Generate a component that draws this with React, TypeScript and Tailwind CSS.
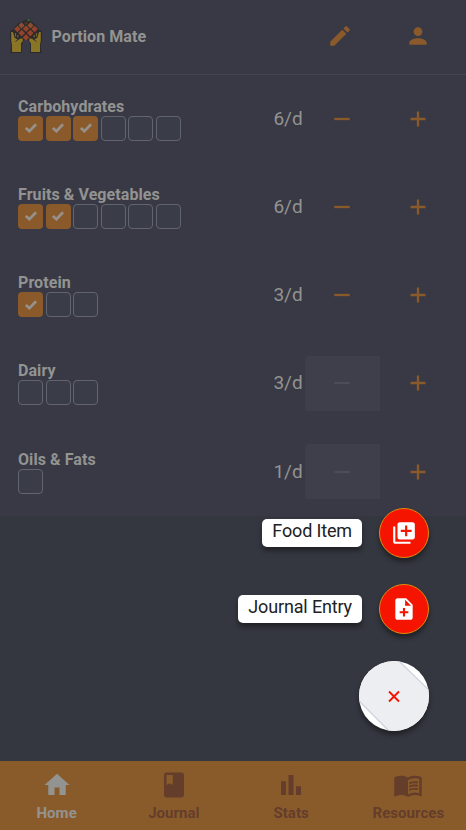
import React from 'react';
import { MdEdit, MdPerson, MdHome, MdBook, MdBarChart, MdMenuBook, MdLibraryAdd, MdNoteAdd } from 'react-icons/md';

type Portion = { name: string; total: number; done: number };

const portions: Portion[] = [
  { name: 'Carbohydrates', total: 6, done: 3 },
  { name: 'Fruits & Vegetables', total: 6, done: 2 },
  { name: 'Protein', total: 3, done: 1 },
  { name: 'Dairy', total: 3, done: 0 },
  { name: 'Oils & Fats', total: 1, done: 0 },
];

function Logo() {
  return (
    <svg viewBox="0 0 34 36" className="h-9 w-[34px] shrink-0">
      <path d="M1 12.500h2L9 5.500l5-2.500 3-1.500 4 1 4 3 6 7h2v11l-1.500 2 1 9.500H21V27l-1-4-3-1.500-3 1.500-1 4v8H1.500l1-9.500L1 23.500z" fill="#2b2a2c" />
      <path d="M2.200 14H4l1.500 5.500L9 22l2.500-1.500h2l.5 2-2 3V34H3v-8l-.8-3z" fill="#8a7426" />
      <path d="M31.800 14H30l-1.500 5.500L25 22l-2.500-1.500h-2l-.5 2 2 3V34h9v-8l.8-3z" fill="#8a7426" />
      <path d="M6.500 15v3.500M8.800 17v2.500M27.500 15v3.500M25.200 17v2.500" stroke="#776329" strokeWidth="1.200" />
      <path d="M6.500 23.500l4-3M27.500 23.500l-4-3" stroke="#3c3527" strokeWidth="1" />
      <g fill="#94432a">
        <path d="M12.500 4.300l3.100 3.100-3.100 3.100-3.100-3.100z" fill="#885030" />
        <path d="M21.500 4.300l3.100 3.100-3.100 3.100-3.100-3.100z" fill="#885030" />
        <path d="M17 7.500l3.300 3.300-3.300 3.300-3.300-3.300z" />
        <path d="M8.400 7.700l3.300 3.300-3.300 3.300L5.100 11z" />
        <path d="M25.600 7.700l3.300 3.300-3.300 3.300-3.300-3.300z" />
        <path d="M12.700 11.800l3.300 3.300-3.300 3.300-3.300-3.300z" />
        <path d="M21.300 11.800l3.300 3.300-3.300 3.300-3.300-3.300z" />
        <path d="M17 16.100l3.300 3.300-3.300 3.300-3.300-3.300z" />
      </g>
      <path d="M17 3.500l2.500 1.500-2.500 2-2-2z" fill="#4b332b" />
      <path d="M17.500 2.300l2.200-1.300 1.800 1.300-2 1z" fill="#33692d" />
    </svg>
  );
}

function Box({ checked }: { checked: boolean }) {
  if (!checked) {
    return <span className="size-[25px] rounded-[4px] border border-[#62646e] bg-[#3a3c47]" />;
  }
  return (
    <span className="flex size-[25px] items-center justify-center rounded-[4px] bg-[#8b5a2a]">
      <svg viewBox="0 0 12 10" className="h-[10px] w-3" fill="none" stroke="#96918c" strokeWidth="2.700">
        <path d="M0.900 4.900L4.400 8.200L11.100 1.300" />
      </svg>
    </span>
  );
}

function Sign({ plus = false }: { plus?: boolean }) {
  return (
    <svg viewBox="0 0 16 16" className="size-4" stroke="currentColor" strokeWidth="2.300">
      <path d={plus ? 'M0.500 8h15M8 0.500v15' : 'M0.300 8h15.400'} />
    </svg>
  );
}

function Row({ name, total, done }: Portion) {
  return (
    <section className="flex h-[88.2px] items-center pb-[0.6px] pl-[18px]">
      <div className="w-[255.4px]">
        <h2 className="h-[19px] text-[16px] leading-[19.600px] font-bold tracking-[0.08px] whitespace-nowrap">{name}</h2>
        <div className="flex gap-[2.5px]">
          {Array.from({ length: total }, (_, i) => (
            <Box key={i} checked={i < done} />
          ))}
        </div>
      </div>
      <span className="w-[31.2px] text-[19px] leading-6">{total}/d</span>
      <button
        className={
          done > 0
            ? 'flex h-[54.6px] w-[75.4px] items-center justify-center pr-px text-[#8b5a2a]'
            : 'flex h-[54.6px] w-[75.4px] items-center justify-center rounded-l-[4px] bg-[#3e3f4a] pr-px text-[#4c4d58]'
        }
      >
        <Sign />
      </button>
      <button className="flex h-[54.6px] w-[76px] items-center justify-center text-[#8b5a2a]">
        <Sign plus />
      </button>
    </section>
  );
}

function Action({ label, children }: { label: string; children: React.ReactNode }) {
  return (
    <div className="flex h-[50px] items-center gap-[17px]">
      <span className="h-7 rounded-[5px] bg-white px-[10px] text-[18px] leading-[24px] tracking-[-0.15px] whitespace-nowrap text-[#202124] shadow-[0_4px_5px_rgba(0,0,0,0.4)]">
        {label}
      </span>
      <button className="flex size-[50px] items-center justify-center rounded-full border border-[#e08a10] bg-[#f51400] text-white shadow-[0_4px_5px_rgba(0,0,0,0.4)]">
        {children}
      </button>
    </div>
  );
}

const tabs = [
  { label: 'Home', Icon: MdHome },
  { label: 'Journal', Icon: MdBook },
  { label: 'Stats', Icon: MdBarChart },
  { label: 'Resources', Icon: MdMenuBook },
];

export default function App() {
  return (
    <div className="relative flex h-[830px] w-[466px] flex-col overflow-hidden bg-[#353740] font-[Roboto,sans-serif] text-[#939391]">
      <div className="bg-[#383945]">
        <header className="flex h-[75px] items-center border-b border-[#42444f] pb-[2px] pl-[9px]">
          <Logo />
          <h1 className="ml-[8.500px] w-[250.500px] pt-[1.500px] text-[16px] font-bold tracking-[0.08px]">Portion Mate</h1>
          <div className="flex w-[76px] justify-center text-[#8b5a2a]"><MdEdit size={26} /></div>
          <div className="flex w-[80px] justify-center text-[#8b5a2a]"><MdPerson size={26} /></div>
        </header>
        <main>
          {portions.map((p) => (
            <Row key={p.name} {...p} />
          ))}
        </main>
      </div>

      <nav className="mt-auto flex h-[69px] justify-center bg-[#8a5b2a] pr-px">
        {tabs.map(({ label, Icon }, i) => (
          <a
            key={label}
            className={
              i === 0
                ? 'flex w-[117.250px] shrink-0 flex-col items-center pt-[9px]'
                : 'flex w-[117.250px] shrink-0 flex-col items-center pt-[9px] text-[#643d2b]'
            }
          >
            <Icon size={30} />
            <span className="mt-[3px] text-[15px] leading-5 font-bold tracking-[0.05px]">{label}</span>
          </a>
        ))}
      </nav>

      <div className="absolute top-[508px] right-[37px] flex flex-col items-end">
        <Action label="Food Item"><MdLibraryAdd size={26} /></Action>
        <div className="mt-[26.400px]">
          <Action label="Journal Entry"><MdNoteAdd size={26} /></Action>
        </div>
        <button className="mt-[26.200px] size-[70px] overflow-hidden rounded-full bg-white shadow-[0_4px_5px_rgba(0,0,0,0.4)]">
          <svg viewBox="0 0 70 70" className="size-[70px]">
            <path d="M0 0H40L70 29V70H30L0 40z" fill="#edeef2" />
            <path d="M40 0L70 29M0 40L30 70" stroke="#cdd0dc" strokeWidth="1.200" />
            <path d="M30 30.500l10 10M40 30.500l-10 10" stroke="#f51400" strokeWidth="1.900" />
          </svg>
        </button>
      </div>
    </div>
  );
}
